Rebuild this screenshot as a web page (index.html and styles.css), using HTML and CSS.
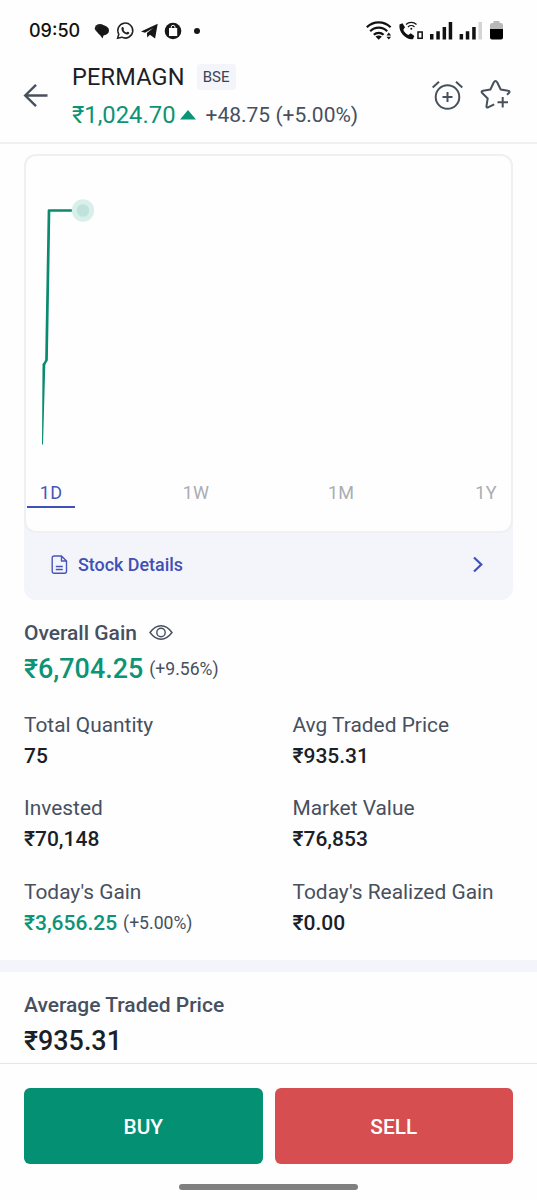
FILE: index.html
```html
<!DOCTYPE html>
<html lang="en">
<head>
    <meta charset="UTF-8">
    <title>PERMAGN</title>
    <link rel="stylesheet" href="styles.css">
</head>
<body>
<div id="app">
    <div class="status">
        <span class="time">09:50</span>
        <svg class="left-icons" width="110" height="22" viewBox="90 20 110 22">
            <ellipse cx="100" cy="28.300" rx="5.200" ry="4.300" fill="#222"/>
            <ellipse cx="103" cy="30.500" rx="6" ry="5" fill="#171717"/>
            <path d="M98.500 33l4 5.500l1.500-4.500z" fill="#171717"/>
            <path d="M117.600 38.300l1.200-4a7.500 7.500 0 1 1 3 2.900z" fill="none" stroke="#222" stroke-width="1.500"/>
            <path d="M121.800 27.200c1.200-.9 1.900.4 2.200 1.600c-1.200 1 .8 3.400 2.600 3.700c1-1.500 1.700-.6 2.800.2c-.6 2.300-2.800 2.200-5 .8c-2.400-1.600-3.700-4.400-2.600-6.300z" fill="#222"/>
            <path d="M141 31.600l16.700-7.800l-2.600 14.800l-5.200-3.800l-2.600 2.700l-.4-4.400l6.300-5.200l-8.200 4.800z" fill="#171717"/>
            <circle cx="173" cy="31" r="8.300" fill="#171717"/>
            <path d="M169 28h8.200v8h-8.200z" fill="#fff"/>
            <path d="M171.200 28.500v-1.300a1.900 1.900 0 0 1 3.800 0v1.300" fill="none" stroke="#fff" stroke-width="1"/>
            <circle cx="197" cy="31" r="3" fill="#171717"/>
        </svg>
        <svg class="right-icons" width="140" height="22" viewBox="365 20 140 22">
            <g fill="none" stroke="#111" stroke-width="2.200">
                <path d="M366.800 27.200a17 17 0 0 1 23.800 0"/>
                <path d="M370.200 31.200a12 12 0 0 1 17 0"/>
                <path d="M373.800 34.800a7 7 0 0 1 9.800 0"/>
            </g>
            <path d="M375.500 36.500q3.200-2 6.400 0l-3.200 3.300z" fill="#111"/>
            <path d="M386.500 35.500l2.300-3l2.300 3zM386.500 36.800h4.600l-2.300 2.700z" fill="#111"/>
            <path d="M399.500 24.500l3-1.200l2.500 4l-1.700 2.400c1 2.500 2.500 4 5 5.200l2.500-1.600l3.500 2.700l-1.200 3c-6 1.500-15-6-13.600-14.500z" fill="#111"/>
            <g fill="none" stroke="#111" stroke-width="1.200">
                <path d="M406 24.500a7.500 7.500 0 0 1 10.500 0"/>
                <path d="M408 27a4.700 4.700 0 0 1 6.500 0"/>
                <rect x="418" y="32" width="4.200" height="6.300" stroke-width="1.500"/>
            </g>
            <circle cx="411.300" cy="28.700" r="1" fill="#111"/>
            <path d="M430 34h3.500v5.500h-3.500zM436.300 31.300h3.500v8.200h-3.500zM442.600 27h3.500v12.500h-3.500zM448.700 22h3.500v17.500h-3.500z" fill="#111"/>
            <path d="M459.600 34h3.500v5.500h-3.500zM465.800 31.300h3.500v8.200h-3.500zM472.200 27h3.500v12.500h-3.500z" fill="#111"/>
            <path d="M478.500 22h3.500v17.500h-3.500z" fill="#d4d4d4"/>
            <path d="M490 29v-4q0-2 2-2h1.500v-2h6v2h1.500q2 0 2 2v4z" fill="#b8b8b8"/>
            <path d="M490 29h13v8.500q0 2-2 2h-9q-2 0-2-2z" fill="#000"/>
        </svg>
    </div>
    <div class="header">
        <svg class="back" width="26" height="26" viewBox="0 0 26 26">
            <path d="M13 1.800L2.200 12.500L13 23.200M2.200 12.500h22.300" fill="none" stroke="#47505e" stroke-width="2.400"/>
        </svg>
        <div class="title">
            <div class="name"><span class="symbol">PERMAGN</span><span class="tag">BSE</span></div>
            <div class="price">
                <span class="ltp">₹1,024.70</span>
                <svg width="16" height="10" viewBox="0 0 16 10"><path d="M8 0l8 9.500H0z" fill="#0c9476"/></svg>
                <span class="change">+48.75 (+5.00%)</span>
            </div>
        </div>
        <svg class="alarm" width="32" height="32" viewBox="431 79 32 32">
            <g fill="none" stroke="#47505e" stroke-width="2">
                <circle cx="447.500" cy="97" r="11.800"/>
                <path d="M447.500 92v10M442.500 97h10M432.700 87.500l6.300-5.700M456 81.800l6.300 5.700"/>
            </g>
        </svg>
        <svg class="star" width="32" height="32" viewBox="480 79 32 32">
            <g fill="none" stroke="#47505e" stroke-width="2" stroke-linejoin="round">
                <path d="M507 94.800l1.900-1.800q1.500-2-.8-2.300l-7.400-1.200l-3.400-7q-1.800-3-3.600 0l-3.300 7l-7.400 1.200q-2.300.6-.8 2.300l5.500 5.500l-1.200 7.400q-.3 2.500 2 1.300l5.700-2.900"/>
                <path d="M502.700 97v10.500M497.500 102.300H508"/>
            </g>
        </svg>
    </div>
    <div class="chart-box">
        <div class="chart">
            <svg class="plot" width="487" height="318" viewBox="25 155 487 318">
                <path d="M45.500 362L46.500 360L49 210.500H73" fill="none" stroke="#0a8a6e" stroke-width="2.700" stroke-linejoin="round"/>
                <path d="M42.500 364l2-2.500l2 .5l-1.200 3L43 444.500h-1z" fill="#0a8a6e"/>
                <circle cx="83" cy="210.500" r="11.200" fill="#d9f0ea"/>
                <circle cx="83" cy="210.500" r="6.300" fill="#bfe3da"/>
            </svg>
            <ul class="tabs">
                <li class="selected">1D</li>
                <li>1W</li>
                <li>1M</li>
                <li>1Y</li>
            </ul>
        </div>
        <div class="details">
            <svg width="17" height="20" viewBox="0 0 17 20">
                <g fill="none" stroke="#4656b8" stroke-width="1.400" stroke-linejoin="round">
                    <path d="M3.200 1h7.300l5 5v10.200q0 2-2 2H3.200q-2 0-2-2V3q0-2 2-2zM10.500 1v5h5M4.800 11.500h7M4.800 14.500h7"/>
                </g>
            </svg>
            <span>Stock Details</span>
            <svg class="next" width="12" height="18" viewBox="0 0 12 18">
                <path d="M2 1.500l7.300 7L2 15.500" fill="none" stroke="#4150b5" stroke-width="2.200"/>
            </svg>
        </div>
    </div>
    <div class="overall">
        <div class="label">
            <span>Overall Gain</span>
            <svg width="24" height="16" viewBox="0 0 24 16">
                <g fill="none" stroke="#47505e" stroke-width="1.400">
                    <path d="M1 7.500Q6 .8 12 .8T23 7.500Q18 14.200 12 14.200T1 7.500z"/>
                    <circle cx="12" cy="7.500" r="4.200"/>
                </g>
            </svg>
        </div>
        <div class="amount"><span class="big green">₹6,704.25</span><span class="pct">(+9.56%)</span></div>
    </div>
    <div class="grid">
        <div class="cell"><div class="key">Total Quantity</div><div class="val">75</div></div>
        <div class="cell"><div class="key">Avg Traded Price</div><div class="val">₹935.31</div></div>
        <div class="cell"><div class="key">Invested</div><div class="val">₹70,148</div></div>
        <div class="cell"><div class="key">Market Value</div><div class="val">₹76,853</div></div>
        <div class="cell"><div class="key">Today's Gain</div><div class="val"><span class="green">₹3,656.25</span><span class="pct">(+5.00%)</span></div></div>
        <div class="cell"><div class="key">Today's Realized Gain</div><div class="val">₹0.00</div></div>
    </div>
    <div class="average">
        <div class="label">Average Traded Price</div>
        <div class="big">₹935.31</div>
    </div>
    <div class="footer">
        <div class="buttons">
            <div class="btn buy">BUY</div>
            <div class="btn sell">SELL</div>
        </div>
        <div class="home"></div>
    </div>
</div>
</body>
</html>
```
FILE: styles.css
```css
*{
    margin: 0;
    padding: 0;
    box-sizing: border-box;
}
body{
    background: #fefefe;
    font-family: Roboto, "Noto Sans", sans-serif;
    color: #1b1f27;
}
li{
    list-style: none;
}
svg{
    display: block;
    flex: none;
}
#app{
    width: 537px;
    height: 1200px;
    overflow: hidden;
    display: flex;
    flex-direction: column;
    white-space: nowrap;
}
.status{
    height: 60px;
    padding: 20px 32px 0 29px;
    display: flex;
    align-items: flex-start;
}
.time{
    width: 61px;
    font: 500 18px/22px Inter, sans-serif;
    color: #111;
}
.right-icons{
    margin-left: auto;
}
.header{
    height: 84px;
    padding: 0 25px 0 23px;
    display: flex;
    border-bottom: 2px solid #f0f0f1;
}
.back{
    margin-top: 23px;
}
.title{
    margin-left: 23px;
    flex: 1;
}
.name{
    height: 34px;
    display: flex;
    align-items: center;
}
.symbol{
    font-size: 23.5px;
    letter-spacing: 0.2px;
}
.tag{
    margin-left: 12px;
    height: 26px;
    padding: 0 6px;
    line-height: 26px;
    font-size: 15px;
    color: #3d4350;
    background: #f4f5fb;
    border-radius: 3px;
}
.price{
    height: 42px;
    display: flex;
    align-items: center;
}
.price svg{
    margin: 0 10px 0 4px;
}
.ltp{
    font-size: 23.8px;
    color: #0c9476;
}
.change{
    font-size: 21px;
    color: #47505e;
}
.alarm{
    margin: 19px 17px 0 0;
}
.star{
    margin-top: 19px;
}
.chart-box{
    margin: 10px 24px 0;
    height: 446px;
    background: #f4f5fb;
    border-radius: 12px;
}
.chart{
    height: 379px;
    background: #fefefe;
    border: 2px solid #f0f0f2;
    border-radius: 12px;
}
.plot{
    margin: -1px;
}
.tabs{
    padding: 0 1px;
    display: flex;
    justify-content: space-between;
}
.tabs li{
    width: 48px;
    height: 36px;
    line-height: 42px;
    text-align: center;
    font-size: 18px;
    letter-spacing: 0.2px;
    color: #aaadb3;
}
.tabs .selected{
    color: #4656b8;
    border-bottom: 2px solid #4150b5;
}
.details{
    height: 63px;
    padding: 0 29px 0 27px;
    display: flex;
    align-items: center;
    font-size: 17.9px;
    font-weight: 500;
    color: #4150b5;
}
.details span{
    margin-left: 10px;
}
.next{
    margin-left: auto;
}
.overall{
    padding: 20px 24px 0;
}
.label{
    height: 26px;
    line-height: 26px;
    display: flex;
    align-items: center;
    font-size: 21px;
    font-weight: 500;
    color: #47505e;
}
.label svg{
    margin-left: 12px;
}
.big{
    font-size: 26.9px;
    font-weight: 500;
    line-height: 46px;
}
.amount{
    height: 46px;
    display: flex;
    align-items: center;
}
.pct{
    margin-left: 6px;
    font-size: 17.6px;
    font-weight: 400;
    color: #47505e;
}
.val .pct{
    vertical-align: 1px;
}
.green{
    color: #0c9476;
}
.grid{
    padding: 18px 0 0 24px;
    display: grid;
    grid-template-columns: 268.5px 1fr;
    grid-auto-rows: 83.4px;
}
.key{
    line-height: 31px;
    font-size: 20.9px;
    color: #47505e;
}
.val{
    line-height: 31px;
    font-size: 21px;
    font-weight: 500;
}
.average{
    height: 103px;
    padding: 20px 24px 0;
    border-top: 12px solid #f4f5fb;
}
.footer{
    flex: 1;
    padding: 24px 24px 0;
    background: #fefefe;
    border-top: 1px solid #e4e5ea;
}
.buttons{
    display: grid;
    grid-template-columns: 1fr 1fr;
    gap: 12px;
}
.btn{
    height: 76px;
    line-height: 78px;
    text-align: center;
    font-size: 20.8px;
    font-weight: 500;
    color: #fff;
    border-radius: 6px;
}
.buy{
    background: #049073;
}
.sell{
    background: #d64e4f;
}
.home{
    width: 179px;
    height: 6px;
    margin: 20px auto 0;
    background: #808080;
    border-radius: 3px;
}
```
